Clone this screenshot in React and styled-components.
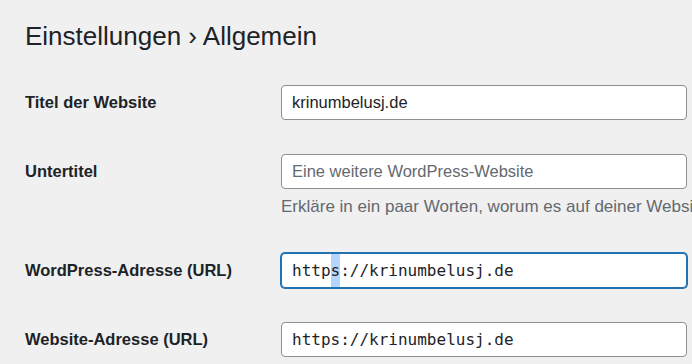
import styled, { createGlobalStyle } from "styled-components";

const GlobalStyle = createGlobalStyle`
  body {
    margin: 0;
    background: #f0f0f1;
    color: #1d2327;
    font-family: "Liberation Sans", Arial, sans-serif;
  }
`;

const fields = [
  { label: "Titel der Website", value: "krinumbelusj.de" },
  {
    label: "Untertitel",
    placeholder: "Eine weitere WordPress-Website",
    description: "Erkläre in ein paar Worten, worum es auf deiner Website geht.",
  },
  { label: "WordPress-Adresse (URL)", value: "https://krinumbelusj.de", mono: true, focused: true },
  { label: "Website-Adresse (URL)", value: "https://krinumbelusj.de", mono: true },
];

function Field({ value, placeholder, mono, focused }) {
  if (focused) {
    // selection on the "s" of https
    return (
      <Input $mono={mono} $focused>
        {value.slice(0, 4)}
        <Selection>{value.slice(4, 5)}</Selection>
        {value.slice(5)}
      </Input>
    );
  }
  return (
    <Input $mono={mono} $placeholder={!value}>
      {value || placeholder}
    </Input>
  );
}

function App() {
  return (
    <Wrap>
      <GlobalStyle />
      <Title>Einstellungen › Allgemein</Title>
      <Form>
        {fields.map((f) => (
          <Row key={f.label}>
            <Label>{f.label}</Label>
            <Control>
              <Field {...f} />
              {f.description && <Description>{f.description}</Description>}
            </Control>
          </Row>
        ))}
      </Form>
    </Wrap>
  );
}

const Wrap = styled.div`
  padding-left: 25px;
  overflow: hidden;
  height: 364px;
`;

const Title = styled.h1`
  margin: 0;
  padding-top: 20px;
  height: 48px;
  font-size: 26px;
  font-weight: 400;
  line-height: 32px;
`;

const Form = styled.div`
  display: flex;
  flex-direction: column;
`;

const Row = styled.div`
  display: grid;
  grid-template-columns: 256px 406px;
  padding: 17px 0;
`;

const Label = styled.div`
  font-size: 16.5px;
  font-weight: 700;
  line-height: 35px;
`;

const Control = styled.div`
  display: flex;
  flex-direction: column;
`;

const Input = styled.div`
  box-sizing: border-box;
  height: 35px;
  padding: 0 10px;
  background: #fff;
  border: 1px solid ${(p) => (p.$focused ? "#2271b1" : "#8c8f94")};
  box-shadow: ${(p) => (p.$focused ? "0 0 0 1px #2271b1" : "none")};
  border-radius: 4px;
  display: flex;
  align-items: stretch;
  line-height: 33px;
  white-space: pre;
  font-size: ${(p) => (p.$mono ? "16px" : "16.5px")};
  font-family: ${(p) =>
    p.$mono ? '"DejaVu Sans Mono", monospace' : '"Liberation Sans", Arial, sans-serif'};
  color: ${(p) => (p.$placeholder ? "#646970" : "#1d2327")};
`;

const Selection = styled.span`
  background: #b4d5fe;
`;

const Description = styled.div`
  margin-top: 6px;
  font-size: 17px;
  line-height: 24px;
  color: #646970;
  white-space: nowrap;
`;

export default App;
